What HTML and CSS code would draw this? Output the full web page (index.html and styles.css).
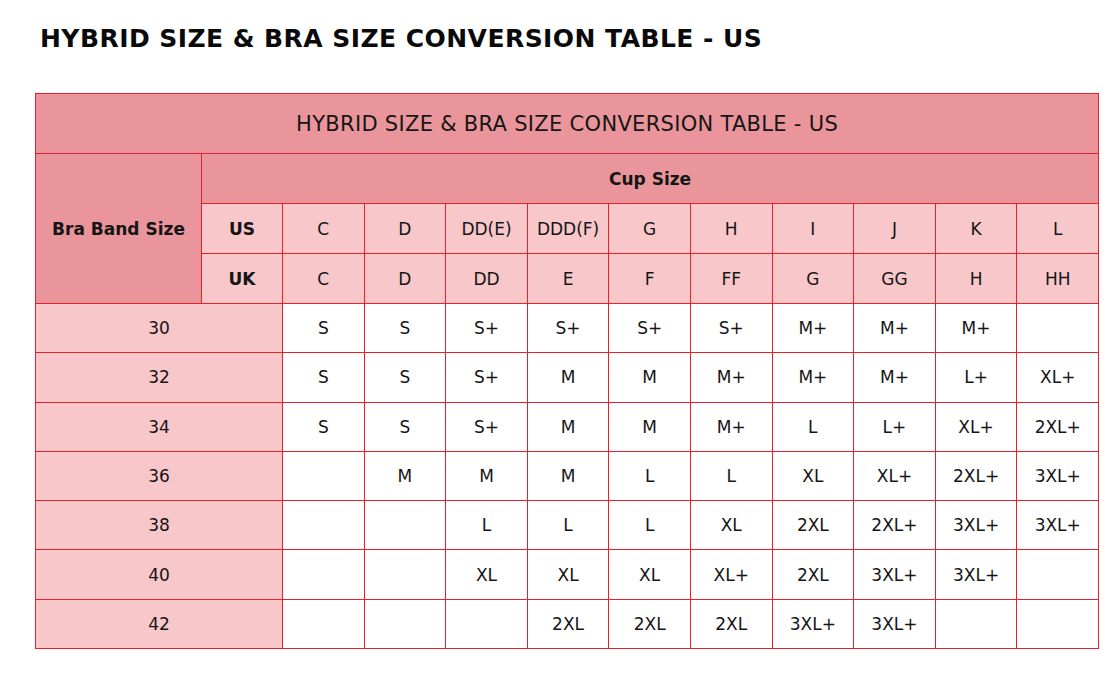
FILE: index.html
```html
<!DOCTYPE html>
<html>
<head>
<meta charset="utf-8">
<link rel="stylesheet" href="styles.css">
</head>
<body>
<h1 class="page-title">HYBRID SIZE &amp; BRA SIZE CONVERSION TABLE - US</h1>
<table class="size-table">
  <colgroup>
    <col class="c-a"><col class="c-b"><col class="c-us"><col class="c-cup"><col class="c-cup"><col class="c-cup"><col class="c-cup"><col class="c-cup"><col class="c-cup"><col class="c-cup"><col class="c-cup"><col class="c-cup"><col class="c-cup">
  </colgroup>
  <tr class="row-title"><th colspan="13" class="dark title-cell">HYBRID SIZE &amp; BRA SIZE CONVERSION TABLE - US</th></tr>
  <tr class="row-cup"><th rowspan="3" colspan="2" class="dark band">Bra Band Size</th><th colspan="11" class="dark cup">Cup Size</th></tr>
  <tr class="row-hd">
    <th class="light bold">US</th><td class="light">C</td><td class="light">D</td><td class="light">DD(E)</td><td class="light">DDD(F)</td><td class="light">G</td><td class="light">H</td><td class="light">I</td><td class="light">J</td><td class="light">K</td><td class="light">L</td>
  </tr>
  <tr class="row-hd">
    <th class="light bold">UK</th><td class="light">C</td><td class="light">D</td><td class="light">DD</td><td class="light">E</td><td class="light">F</td><td class="light">FF</td><td class="light">G</td><td class="light">GG</td><td class="light">H</td><td class="light">HH</td>
  </tr>
  <tr class="row-data"><td colspan="3" class="light">30</td><td>S</td><td>S</td><td>S+</td><td>S+</td><td>S+</td><td>S+</td><td>M+</td><td>M+</td><td>M+</td><td></td></tr>
  <tr class="row-data"><td colspan="3" class="light">32</td><td>S</td><td>S</td><td>S+</td><td>M</td><td>M</td><td>M+</td><td>M+</td><td>M+</td><td>L+</td><td>XL+</td></tr>
  <tr class="row-data"><td colspan="3" class="light">34</td><td>S</td><td>S</td><td>S+</td><td>M</td><td>M</td><td>M+</td><td>L</td><td>L+</td><td>XL+</td><td>2XL+</td></tr>
  <tr class="row-data"><td colspan="3" class="light">36</td><td></td><td>M</td><td>M</td><td>M</td><td>L</td><td>L</td><td>XL</td><td>XL+</td><td>2XL+</td><td>3XL+</td></tr>
  <tr class="row-data"><td colspan="3" class="light">38</td><td></td><td></td><td>L</td><td>L</td><td>L</td><td>XL</td><td>2XL</td><td>2XL+</td><td>3XL+</td><td>3XL+</td></tr>
  <tr class="row-data"><td colspan="3" class="light">40</td><td></td><td></td><td>XL</td><td>XL</td><td>XL</td><td>XL+</td><td>2XL</td><td>3XL+</td><td>3XL+</td><td></td></tr>
  <tr class="row-data"><td colspan="3" class="light">42</td><td></td><td></td><td></td><td>2XL</td><td>2XL</td><td>2XL</td><td>3XL+</td><td>3XL+</td><td></td><td></td></tr>
</table>
</body>
</html>
```

FILE: styles.css
```css
html, body {
  margin: 0;
  padding: 0;
  background: #ffffff;
}
body {
  padding: 22px 22px 0 35px;
  font-family: "DejaVu Sans", "Liberation Sans", sans-serif;
  color: #111111;
}
.page-title {
  margin: 0 0 37px 5px;
  font-size: 25px;
  font-weight: bold;
  letter-spacing: 0.45px;
  line-height: 34px;
  color: #0a0a0a;
}
.size-table {
  width: 1063px;
  border-collapse: collapse;
  table-layout: fixed;
  border: 1px solid #e0323a;
}
.c-a { width: 85px; }
.c-b { width: 81px; }
.c-us { width: 81px; }
.c-cup { width: 81.6px; }
.size-table td, .size-table th {
  border: 1px solid #e4222c;
  text-align: center;
  padding: 0;
  font-size: 17px;
  font-weight: normal;
  color: #151515;
}
.row-title th {
  height: 59px;
  font-size: 21px;
  letter-spacing: 0.3px;
}
.row-cup th { height: 49px; }
.row-hd th, .row-hd td { height: 49px; }
.row-data td { height: 48.3px; }
.dark { background: #ea959b; }
.light { background: #f8c7ca; }
.bold, .band, .cup { font-weight: bold !important; }
```
